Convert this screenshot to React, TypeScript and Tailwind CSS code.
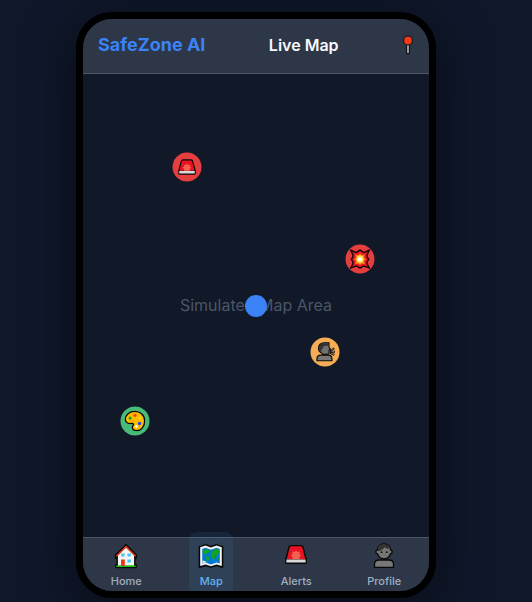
import type { ReactNode } from "react";

type IconProps = { className: string };

function PinIcon({ className }: IconProps) {
  return (
    <svg viewBox="0 0 12 20" className={className} aria-hidden="true">
      <path d="M4 8h4v10c0 .8-.7 1.300-2 1.300S4 18.800 4 18z" fill="#111" />
      <path d="M5 8h2v9.500c0 .4-.4.6-1 .6s-1-.2-1-.6z" fill="#9a9a9a" />
      <circle cx="6" cy="5.500" r="4.900" fill="#111" />
      <circle cx="6" cy="5.500" r="3.900" fill="#f03a17" />
    </svg>
  );
}

function HouseIcon({ className }: IconProps) {
  return (
    <svg viewBox="0 0 26 26" className={className} aria-hidden="true">
      <path d="M13 1 2.300 11.700v3.800h1.500v6H2.500v3.300h21v-3.300h-1.300v-6h1.500v-3.800z" fill="#050505" stroke="#050505" strokeWidth=".6" strokeLinejoin="round" />
      <path d="M4.900 12.500 13 4.400l8.100 8.100v10.300H4.900z" fill="#f4f4f4" />
      <path d="M3.300 13.200 13 3.500l9.700 9.700" fill="none" stroke="#f03a17" strokeWidth="1.500" />
      <path d="M3.300 22.500h19.400v1.400H3.300z" fill="#16c60c" />
      <path d="M8 16.500h3.800v6.500H8z" fill="#e8391d" />
      <path d="M8.200 10.500h3.300v3H8.200zM14.500 10.500h3.300v3h-3.300zM14.500 16.500h3.300v3h-3.300z" fill="#41c8f4" />
    </svg>
  );
}

function MapIcon({ className }: IconProps) {
  return (
    <svg viewBox="0 0 26 26" className={className} aria-hidden="true">
      <path d="M1 3.200h1.700L7.500 1.200 13 3.200l5.500-2L23.300 3.200H25v21.200h-1.700l-4.800-1.600-5.500 1.700-5.500-1.700-4.800 1.600H1z" fill="#080808" stroke="#080808" strokeWidth=".7" strokeLinejoin="round" />
      <path d="M2.200 4.300 7.500 2.500 13 4.500l5.500-2 5.300 1.800v18.600l-5.300-1.500-5.500 1.900-5.500-1.900-5.300 1.500z" fill="#f2f2f2" />
      <path d="M4.200 5.900 7.500 4.700 13 6.700l5.500-2 3.300 1.200v14.600l-3.300-.9-5.500 1.900-5.500-1.900-3.300.9z" fill="#0078d7" />
      <path d="m4.800 7.800 3-1.800 4.400 1.500-1.200 1.900-1.900.6-1.100 1.800-1.500-.6-1.700-1.200zM8.300 12.900l2.300.7 1 1.400-1.300 2.500-.7 2-1-.7-.1-2.500-.9-1.600zM12.800 10.200l1.300-2.300 4-2.100 3.100 1.100.2 2.800-1.500 1.100.1 1.700-1.100 1.400-1.200-1.700-.9.6.2 1.900-1.300 2.900-1.100-.3-.2-2.600-1.700-1.400zM19 15.500l1.800-.4.200 2.200-1.600.4z" fill="#14a326" />
      <path d="m4.400 17.400 2.600.6 1.800 1.700-1.400-.3-3 .6z" fill="#ededed" />
    </svg>
  );
}

function SirenIcon({ className, viewBox = "0 0 26 26" }: IconProps & { viewBox?: string }) {
  return (
    <svg viewBox={viewBox} className={className} aria-hidden="true">
      <path d="M8.200 2h9.600c1.600 0 2.500.9 2.900 2.300l3.100 11.300v4.200c0 .8-.4 1.200-1.200 1.200H3.400c-.8 0-1.200-.4-1.200-1.200v-4.200L5.300 4.300C5.700 2.900 6.600 2 8.200 2z" fill="#080808" />
      <path d="M8.600 3.300h8.800c1 0 1.700.5 2 1.500l2.900 11.400H3.700L6.600 4.800c.3-1 1-1.500 2-1.500z" fill="#e81224" />
      <path d="m13 7.200 1.500 1.800 2.500-.4-.5 2.400 1.900 1.500-2 1.300.5 2.200H9.100l.5-2.200-2-1.300L9.500 11 9 8.600l2.500.4z" fill="#f5604f" />
      <path d="M3.400 16.400h19.200v3.200H3.400z" fill="#d9d9d9" />
    </svg>
  );
}

function PersonIcon({ className }: IconProps) {
  return (
    <svg viewBox="0 0 26 26" className={className} aria-hidden="true">
      <path d="M3.500 24.300v-3.200c0-2.500 1.900-4.100 4.700-4.100h9.600c2.800 0 4.700 1.600 4.700 4.100v3.200z" fill="#777" stroke="#080808" strokeWidth="1.300" strokeLinejoin="round" />
      <path d="M13 .9c4 0 6.600 2.700 6.700 6.100 1 .1 1.500.8 1.500 1.800s-.6 1.800-1.700 2c-.9 3-3.300 5-6.500 5s-5.600-2-6.500-5c-1.100-.2-1.700-1-1.700-2S5.300 7.100 6.300 7C6.400 3.600 9 .9 13 .9z" fill="#767676" stroke="#080808" strokeWidth="1.300" />
      <path d="M7 8.200C6.800 4.100 9.200 1.600 13 1.600c3 0 5.200 1.500 5.900 4.200-2.300 0-3.900-.5-5.200-1.500C11.700 6.600 9.700 7.900 7 8.200z" fill="#333" />
      <circle cx="10.500" cy="9.200" r=".9" fill="#080808" />
      <circle cx="15.700" cy="9.200" r=".9" fill="#080808" />
    </svg>
  );
}

function BlastIcon({ className }: IconProps) {
  return (
    <svg viewBox="0 0 20 20" className={className} aria-hidden="true">
      <path d="m1.100 1.500 4.700 2.200 1.900-.7 2.300-1.500L12.300 3l1.900.7 4.700-2.200-2.200 4.700.3 2.200 1.300 1.900-1.300 2 -.3 2 2.200 4.400-4.700-1.900-1.900.500-2.300 1.500-2.300-1.500-1.900-.5-4.700 1.900 2.200-4.400-.3-2-1.300-2L3 8.400l.3-2.200z" fill="#e81224" stroke="#080808" strokeWidth="1.200" strokeLinejoin="miter" />
      <path d="m5.400 5.600 2.900.7L10 4.500l1.700 1.800 2.900-.7-.7 2.900 1.600 1.800-1.600 1.700.7 2.900-2.900-.7L10 16l-1.700-1.800-2.900.7.7-2.900-1.600-1.700 1.600-1.800z" fill="#f9821d" />
      <path d="m7 7.200 1.900.3L10 6.300l1.100 1.200 1.900-.3-.3 1.900 1.100 1.200-1.100 1.100.3 1.900-1.900-.3-1.100 1.200L8.900 13l-1.900.3.3-1.900-1.100-1.100 1.100-1.200z" fill="#fde25a" />
      <circle cx="10" cy="10.300" r="1.900" fill="#fff" />
    </svg>
  );
}

function SpeakerIcon({ className }: IconProps) {
  return (
    <svg viewBox="0 0 20 20" className={className} aria-hidden="true">
      <path d="M1.500 19.300v-2.400c0-2 1.500-3.200 3.700-3.200h7.600c2.200 0 3.600 1.200 3.600 3.200v2.400z" fill="#777" stroke="#080808" strokeWidth="1.200" strokeLinejoin="round" />
      <path d="M8.600 1.200h4.900v4.200l1.400 2.500-1.300.7v2.600c0 1.100-.6 1.700-1.700 1.700H7.200l-1.300-1.500C4.100 10.700 3 9 3 6.800c0-3.300 2.300-5.600 5.600-5.600z" fill="#707070" stroke="#080808" strokeWidth="1.100" />
      <path d="M13 1.700H8.600c-2.900 0-5 2.100-5 5.100 0 1.700.8 3.100 2.300 3.900V8.300l1.300-1.400 1-2.200 4.800-.6z" fill="#333" />
      <path d="m14.600 9 4.200-2.200M14.600 10.200h4.800M14.600 11.300l4.200 2" stroke="#080808" strokeWidth="1.900" />
      <path d="m15.600 8.500 2.700-1.400M16 10.200h2.700M15.600 11.800l2.700 1.200" stroke="#bbb" strokeWidth=".7" />
    </svg>
  );
}

function PaletteIcon({ className }: IconProps) {
  return (
    <svg viewBox="0 0 20 20" className={className} aria-hidden="true">
      <path d="M9.800.9c5.300 0 9.400 3.500 9.400 8.800 0 5.400-3.200 9.500-7.500 9.500-2.700 0-4.300-1.400-4.300-3.200 0-1.400 1.400-1.900 1.200-2.900-.3-1-1.400-.7-3-.7C2.600 12.400.8 11 .8 8.400.8 4.300 4.700.9 9.800.9z" fill="#ffb900" stroke="#080808" strokeWidth="1.200" />
      <circle cx="10" cy="4.600" r="1.500" fill="#e84a17" />
      <circle cx="5.300" cy="7.200" r="1.500" fill="#16a615" />
      <circle cx="14.700" cy="7.200" r="1.400" fill="#fce100" />
      <circle cx="14.300" cy="12.400" r="1.600" fill="#114ee8" />
      <circle cx="11.200" cy="15.200" r="1.300" fill="#fff" />
    </svg>
  );
}

function Marker({ label, place, children }: { label: string; place: string; children: ReactNode }) {
  return (
    <button
      type="button"
      aria-label={label}
      className={`absolute flex size-[29px] -translate-x-1/2 -translate-y-1/2 items-center justify-center rounded-full ${place}`}
    >
      {children}
    </button>
  );
}

const tabs = [
  { name: "Home", Icon: HouseIcon },
  { name: "Map", Icon: MapIcon },
  { name: "Alerts", Icon: SirenIcon },
  { name: "Profile", Icon: PersonIcon },
];

export default function App() {
  return (
    <div className="flex min-h-screen justify-center bg-[#0f172a] pt-3 pr-5 pb-1 font-['Inter',sans-serif]">
      <div className="flex w-full max-w-[360px] flex-col overflow-hidden rounded-[36px] border-[7px] border-black bg-[#111827] shadow-[0_10px_50px_rgba(0,0,0,0.5)]">
        <header className="flex h-[55px] items-center justify-between border-b border-[#4a5568] bg-[#2d3748] px-[15px] pb-0.5">
          <span className="text-lg font-bold text-[#3b82f6]">SafeZone AI</span>
          <h1 className="text-base font-semibold text-[#f7fafc]">Live Map</h1>
          <button type="button" aria-label="Locate me">
            <PinIcon className="h-5 w-3" />
          </button>
        </header>

        <main className="relative flex flex-1 items-center justify-center">
          <p className="pb-0.5 text-base text-[#4a5568]">Simulated Map Area</p>
          <Marker label="Emergency" place="left-[30%] top-[20%] bg-[#e53e3e]">
            <SirenIcon className="size-[21px]" viewBox="0 -1.5 26 26" />
          </Marker>
          <Marker label="Explosion" place="left-[80%] top-[40%] bg-[#e53e3e]">
            <BlastIcon className="size-[21px]" />
          </Marker>
          <Marker label="Disturbance" place="left-[70%] top-[60%] bg-[#f6ad55]">
            <SpeakerIcon className="size-5" />
          </Marker>
          <Marker label="Art event" place="left-[15%] top-[75%] bg-[#48bb78]">
            <PaletteIcon className="size-[21px]" />
          </Marker>
          <div className="absolute top-1/2 left-1/2 size-[22px] -translate-x-1/2 -translate-y-1/2 rounded-full bg-[#3b82f6]" />
        </main>

        <nav className="relative flex h-[54px] items-center justify-around border-t border-[#4a5568] bg-[#2d3748]">
          {tabs.map(({ name, Icon }) => {
            const active = name === "Map";
            return (
              <a
                key={name}
                href={`#${name.toLowerCase()}`}
                aria-current={active ? "page" : undefined}
                className={`flex h-[65px] min-w-11 flex-col items-center gap-1 rounded-lg px-2 pt-[11px] text-[11px] leading-4 font-medium ${
                  active ? "bg-[#4299e1]/10 text-[#63b3ed]" : "text-[#a0aec0]"
                }`}
              >
                <Icon className="size-[26px]" />
                <span>{name}</span>
              </a>
            );
          })}
        </nav>
      </div>
    </div>
  );
}
